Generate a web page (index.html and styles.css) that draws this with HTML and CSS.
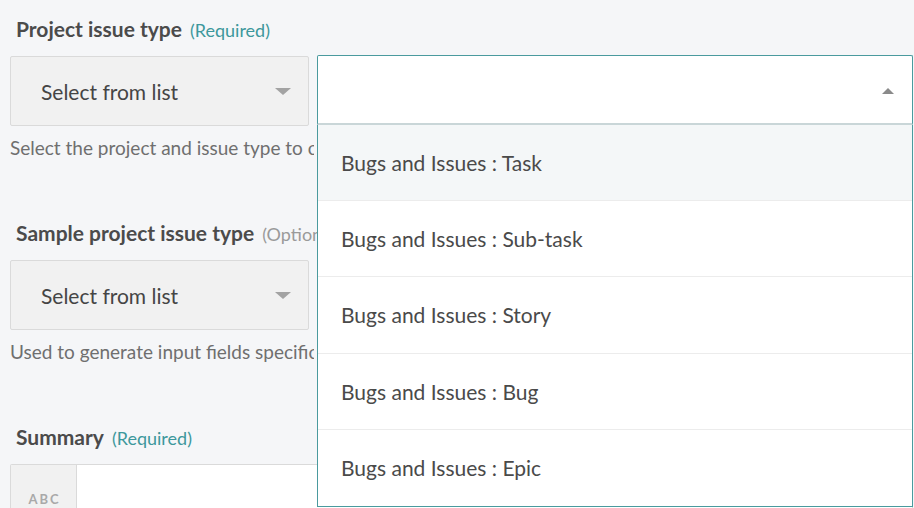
FILE: index.html
```html
<!DOCTYPE html>
<html lang="en">
<head>
<meta charset="utf-8">
<title>Issue form</title>
<link rel="stylesheet" href="styles.css">
</head>
<body>
<div class="form">
  <div class="field">
    <div class="label"><span class="label-main">Project issue type</span><span class="req">(Required)</span></div>
    <div class="row">
      <div class="select">
        <span class="select-text">Select from list</span>
        <span class="caret-down"></span>
      </div>
      <div class="combo">
        <div class="combo-input">
          <span class="caret-up"></span>
        </div>
        <ul class="menu">
          <li class="option active">Bugs and Issues : Task</li>
          <li class="option">Bugs and Issues : Sub-task</li>
          <li class="option">Bugs and Issues : Story</li>
          <li class="option">Bugs and Issues : Bug</li>
          <li class="option">Bugs and Issues : Epic</li>
        </ul>
      </div>
    </div>
    <div class="help">Select the project and issue type to create issues in</div>
  </div>

  <div class="field">
    <div class="label"><span class="label-main">Sample project issue type</span><span class="opt">(Optional)</span></div>
    <div class="row">
      <div class="select">
        <span class="select-text">Select from list</span>
        <span class="caret-down"></span>
      </div>
    </div>
    <div class="help">Used to generate input fields specific to the issue type</div>
  </div>

  <div class="field">
    <div class="label"><span class="label-main">Summary</span><span class="req">(Required)</span></div>
    <div class="text-input">
      <div class="prefix">ABC</div>
      <div class="input-area"></div>
    </div>
  </div>
</div>
</body>
</html>
```

FILE: styles.css
```css
html, body {
  margin: 0;
  padding: 0;
  background: #f5f6f8;
  font-family: Lato, "Open Sans", sans-serif;
  overflow: hidden;
}

.form {
  padding: 17px 1px 0 10px;
}

.field {
  margin-bottom: 62px;
}

.label {
  display: flex;
  align-items: baseline;
  gap: 8px;
  height: 24px;
  line-height: 24px;
  margin-left: 6px;
  margin-bottom: 15px;
  white-space: nowrap;
  overflow: hidden;
  max-width: 301px;
}

.label-main {
  font-size: 21px;
  font-weight: 700;
  color: #4b4b4b;
}

.req {
  font-size: 18px;
  font-weight: 400;
  color: #3d989c;
}

.opt {
  font-size: 18px;
  font-weight: 400;
  color: #9a9a9a;
}

.row {
  display: flex;
  align-items: flex-start;
  gap: 8px;
}

.select {
  box-sizing: border-box;
  width: 299px;
  height: 70px;
  flex: none;
  background: #f1f1f1;
  border: 1px solid #dadada;
  border-radius: 2px;
  display: flex;
  align-items: center;
  justify-content: space-between;
  padding: 0 17px 0 30px;
}

.select-text {
  font-size: 21px;
  color: #454545;
}

.caret-down {
  width: 0;
  height: 0;
  border-left: 8px solid transparent;
  border-right: 8px solid transparent;
  border-top: 7px solid #a3a3a3;
}

.help {
  height: 22px;
  max-width: 304px;
  overflow: hidden;
  font-size: 19px;
  color: #6f6f6f;
  line-height: 22px;
  margin-top: 11px;
  white-space: nowrap;
}

.combo {
  position: relative;
  flex: 1;
  margin-top: -1px;
  z-index: 2;
}

.combo-input {
  box-sizing: border-box;
  height: 70px;
  background: #fff;
  border: 1px solid #4a9a9e;
  border-bottom: 2px solid #c9d6d8;
  border-radius: 2px 2px 0 0;
  display: flex;
  align-items: center;
  justify-content: flex-end;
  padding: 0 18px 0 0;
}

.caret-up {
  width: 0;
  height: 0;
  border-left: 6px solid transparent;
  border-right: 6px solid transparent;
  border-bottom: 6px solid #8a8a8a;
  margin-top: 2px;
}

.menu {
  position: absolute;
  left: 0;
  right: 0;
  top: 100%;
  margin: 0;
  padding: 0;
  list-style: none;
  background: #fff;
  border: 1px solid #4a9a9e;
  border-top: none;
}

.option {
  box-sizing: border-box;
  height: 76.2px;
  display: flex;
  align-items: center;
  padding-left: 23px;
  font-size: 21px;
  color: #4a4a4a;
  border-bottom: 1px solid #ececec;
}

.option:last-child {
  border-bottom: none;
}

.option.active {
  background: #f4f7f8;
}

.text-input {
  display: flex;
  height: 44px;
  border: 1px solid #dadada;
  border-bottom: none;
  border-radius: 2px 2px 0 0;
  background: #fff;
}

.prefix {
  box-sizing: border-box;
  width: 66px;
  background: #f1f1f1;
  border-right: 1px solid #dadada;
  font-size: 13px;
  font-weight: 700;
  letter-spacing: 2px;
  line-height: 13px;
  color: #a9a9a9;
  text-align: center;
  padding: 28px 0 0 2px;
}

.input-area {
  flex: 1;
}
```
